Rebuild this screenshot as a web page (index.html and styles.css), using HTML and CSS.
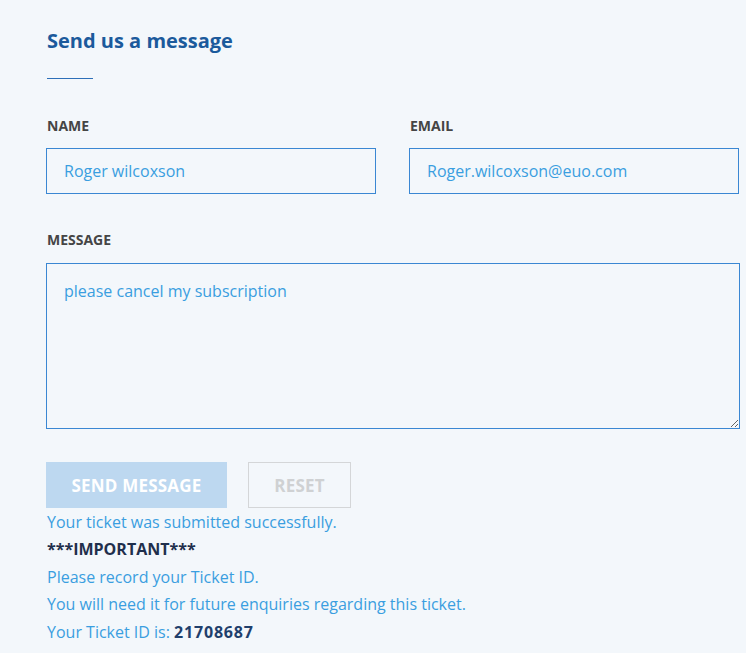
FILE: index.html
```html
<!DOCTYPE html>
<html>
<head>
<meta charset="utf-8">
<link rel="stylesheet" href="styles.css">
</head>
<body>
<div class="contact">
  <h2 class="title">Send us a message</h2>
  <div class="rule"></div>
  <form class="form">
    <div class="row">
      <div class="field">
        <label class="label">NAME</label>
        <input class="input" type="text" value="Roger wilcoxson">
      </div>
      <div class="field">
        <label class="label">EMAIL</label>
        <input class="input" type="text" value="Roger.wilcoxson@euo.com">
      </div>
    </div>
    <div class="field full">
      <label class="label">MESSAGE</label>
      <textarea class="textarea">please cancel my subscription</textarea>
    </div>
    <div class="actions">
      <button type="button" class="btn btn-send">SEND MESSAGE</button>
      <button type="button" class="btn btn-reset">RESET</button>
    </div>
  </form>
  <div class="result">
    <p class="line">Your ticket was submitted successfully.</p>
    <p class="line strong">***IMPORTANT***</p>
    <p class="line">Please record your Ticket ID.</p>
    <p class="line">You will need it for future enquiries regarding this ticket.</p>
    <p class="line">Your Ticket ID is: <b class="id">21708687</b></p>
  </div>
</div>
</body>
</html>
```
FILE: styles.css
```css
html, body {
  margin: 0;
  padding: 0;
  background: #f3f7fb;
}
body {
  font-family: "Open Sans", "Noto Sans", sans-serif;
  overflow: hidden;
}
.contact {
  padding: 26px 0 0 46px;
  width: 694px;
}
.title {
  margin: 0 0 0 1px;
  font-size: 20px;
  line-height: 30px;
  font-weight: 700;
  color: #1b5a9c;
}
.rule {
  margin: 22px 0 0 1px;
  width: 46px;
  height: 1px;
  background: #2d6fb8;
}
.form {
  margin-top: 38px;
}
.row {
  display: flex;
  gap: 33px;
}
.field {
  display: flex;
  flex-direction: column;
  width: 330px;
}
.field.full {
  width: 694px;
  margin-top: 37px;
}
.label {
  margin-left: 1px;
  font-size: 14px;
  line-height: 18px;
  font-weight: 700;
  color: #454545;
}
.input, .textarea {
  box-sizing: border-box;
  margin-top: 13px;
  border: 1px solid #3a87d3;
  background: #f3f7fb;
  font-family: inherit;
  font-size: 16px;
  color: #3a9ee0;
  outline: none;
}
.input {
  height: 46px;
  padding: 0 17px;
  width: 330px;
}
.textarea {
  margin-top: 14px;
  height: 166px;
  padding: 16px 17px;
  line-height: 22px;
  width: 694px;
  resize: vertical;
}
.actions {
  display: flex;
  gap: 21px;
  margin-top: 33px;
}
.btn {
  box-sizing: border-box;
  height: 46px;
  padding: 0;
  font-family: inherit;
  font-size: 17px;
  font-weight: 700;
  letter-spacing: 0.2px;
  cursor: default;
}
.btn-send {
  width: 181px;
  border: none;
  background: #bdd8f0;
  color: #ffffff;
}
.btn-reset {
  width: 103px;
  border: 1px solid #d4d6d8;
  background: transparent;
  color: #cfd1d3;
}
.result {
  margin-left: 1px;
}
.line {
  margin: 0;
  font-size: 16px;
  line-height: 27.5px;
  color: #3a9ee0;
}
.line:first-child {
  line-height: 28px;
}
.strong {
  font-weight: 700;
  color: #1f2f4c;
}
.id {
  color: #1f3f6c;
  letter-spacing: 0.8px;
}
```
